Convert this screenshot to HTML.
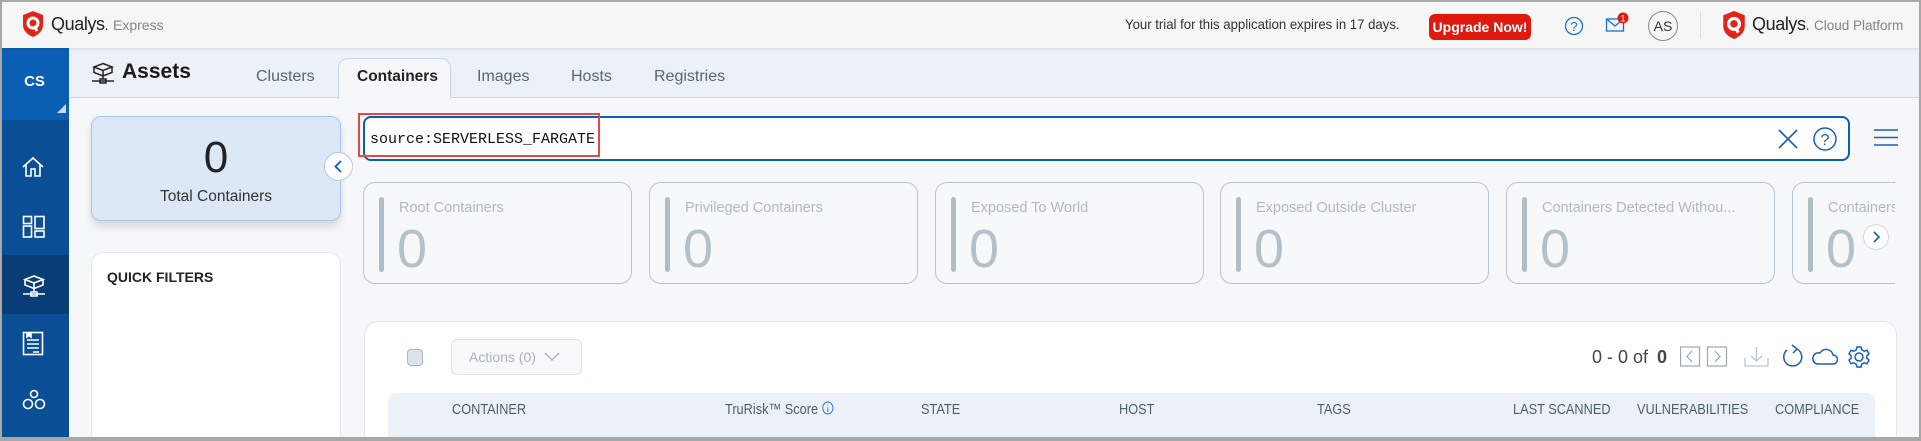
<!DOCTYPE html>
<html style="width:1921px;height:441px;overflow:hidden"><head><meta charset="utf-8"><style>
*{box-sizing:border-box;margin:0;padding:0}
body{width:1921px;height:441px;overflow:hidden;font-family:"Liberation Sans",sans-serif;background:#f5f7f9;position:relative;color:#333}
.a{position:absolute}
.frame{position:absolute;left:0;top:0;width:1921px;height:441px;border:2px solid #a8a8a8;border-bottom-width:4px;pointer-events:none;z-index:50}
.hdr{left:0;top:0;width:1921px;height:48px;background:#f6f6f6;box-shadow:0 1px 3px rgba(0,0,0,.1);z-index:5}
.side{left:0;top:48px;width:69px;height:393px;background:#0a4f96}
.tabbar{left:69px;top:48px;width:1852px;height:50px;background:#ecf1f8;border-bottom:1px solid #c5d7ec}
.tab{top:68px;font-size:16px;color:#5a6570}
.card{width:269px;height:102px;top:182px;border:1px solid #b8c4ce;border-radius:12px;background:#f6f8fa;overflow:hidden}
.card .bar{position:absolute;left:15px;top:14px;width:5px;height:75px;border-radius:3px;background:#b0bec8}
.card .t{position:absolute;left:35px;top:17px;font-size:14.5px;color:#aeb9c3;white-space:nowrap}
.card .n{position:absolute;left:33px;top:35px;font-size:54px;color:#b4c0ca;font-weight:300}
.th{top:401px;font-size:15px;color:#4e5d6c;transform:scaleX(.85);transform-origin:left}
</style></head><body>
<div class="frame"></div>
<div class="a hdr">
 <svg class="a" style="left:23px;top:11px" width="20" height="26" viewBox="0 0 20 26"><path d="M10 0 L20 4 V14 C20 20 15 24 10 26 C5 24 0 20 0 14 V4 Z" fill="#e2231a"/><circle cx="10" cy="12" r="5" fill="none" stroke="#fff" stroke-width="3"/><path d="M11 15 L14 20" stroke="#fff" stroke-width="3"/></svg>
 <div class="a" style="left:51px;top:14px;font-size:18px;color:#222;letter-spacing:-.4px">Qualys<span style="font-size:14px">.</span></div>
 <div class="a" style="left:113px;top:17px;font-size:14px;color:#7d8590">Express</div>
 <div class="a" style="left:1125px;top:16px;font-size:14px;color:#333;transform:scaleX(.94);transform-origin:left">Your trial for this application expires in 17 days.</div>
 <div class="a" style="left:1429px;top:14px;width:102px;height:26px;background:#e0190e;border-radius:6px;color:#fff;font-size:14px;line-height:26px;text-align:center;font-weight:bold">Upgrade Now!</div>
 <svg class="a" style="left:1564px;top:16px" width="20" height="20"><circle cx="10" cy="10" r="8.5" fill="none" stroke="#1a6fcc" stroke-width="1.3"/><text x="10" y="15" font-size="13" text-anchor="middle" fill="#1a6fcc" font-family="Liberation Sans">?</text></svg>
 <svg class="a" style="left:1605px;top:12px" width="26" height="24"><rect x="1.5" y="7" width="17" height="12" fill="none" stroke="#1a6fcc" stroke-width="1.3"/><path d="M1.5 7 L10 14 L18.5 7" fill="none" stroke="#1a6fcc" stroke-width="1.3"/><circle cx="18" cy="6" r="5.5" fill="#e0190e"/><text x="18" y="9.5" font-size="9" text-anchor="middle" fill="#fff" font-family="Liberation Sans">1</text></svg>
 <div class="a" style="left:1648px;top:11px;width:30px;height:30px;border:1px solid #7d8b98;border-radius:50%;font-size:14px;line-height:28px;text-align:center;color:#333">AS</div>
 <div class="a" style="left:1700px;top:12px;width:1px;height:26px;background:#ddd"></div>
 <svg class="a" style="left:1722px;top:11px" width="24" height="28" viewBox="0 0 20 26"><path d="M10 0 L20 4 V14 C20 20 15 24 10 26 C5 24 0 20 0 14 V4 Z" fill="#e2231a"/><circle cx="10" cy="12" r="5" fill="none" stroke="#fff" stroke-width="3"/><path d="M11 15 L14 20" stroke="#fff" stroke-width="3"/></svg>
 <div class="a" style="left:1752px;top:14px;font-size:18px;color:#222;letter-spacing:-.4px">Qualys<span style="font-size:14px">.</span></div>
 <div class="a" style="left:1814px;top:18px;font-size:13.5px;color:#7d8590">Cloud Platform</div>
</div>

<div class="a side">
 <div class="a" style="left:0;top:0;width:69px;height:72px;background:#0a5fb4;color:#fff;font-weight:bold;font-size:15px;text-align:center;line-height:68px">CS</div>
 <div class="a" style="left:57px;top:56px;width:0;height:0;border-left:9px solid transparent;border-bottom:9px solid #c9d9ec"></div>
 <div class="a" style="left:0;top:207px;width:69px;height:59px;background:#083d75"></div>
 <svg class="a" style="left:21px;top:107px" width="24" height="24" fill="none" stroke="#fff" stroke-width="1.6"><path d="M2 12 L12 3 L22 12 M5 10 V21 H10 V14 H14 V21 H19 V10"/></svg>
 <svg class="a" style="left:22px;top:167px" width="24" height="24" fill="none" stroke="#fff" stroke-width="1.6"><rect x="1.5" y="1.5" width="8" height="7"/><rect x="1.5" y="11" width="8" height="11"/><rect x="13" y="1.5" width="9" height="12"/><rect x="13" y="16" width="9" height="6"/></svg>
 <svg class="a" style="left:21px;top:226px" width="26" height="24" fill="none" stroke="#fff" stroke-width="1.6"><path d="M13 2 L22 5.5 L13 9 L4 5.5 Z M4 5.5 V11 L13 14.5 L22 11 V5.5 M13 9 V14.5 M13 14.5 V18 M2 20 H24 M10 18 H16 V22 H10Z"/></svg>
 <svg class="a" style="left:22px;top:283px" width="22" height="26" fill="none" stroke="#fff" stroke-width="1.6"><rect x="1.5" y="1.5" width="19" height="22"/><path d="M5 9 H17 M5 13 H17 M5 17 H17 M11 21 H17"/><path d="M5 2 V6 L7 4.5 L9 6 V2" fill="#fff"/></svg>
 <svg class="a" style="left:21px;top:340px" width="26" height="24" fill="none" stroke="#fff" stroke-width="1.6"><circle cx="13" cy="6" r="3.5"/><circle cx="7" cy="16" r="4.5"/><circle cx="19" cy="16" r="4.5"/></svg>
</div>

<div class="a tabbar">
 <svg class="a" style="left:22px;top:14px" width="24" height="22" fill="none" stroke="#222" stroke-width="1.5"><path d="M12 1.5 L21 5 L12 8.5 L3 5 Z M3 5 V10.5 L12 14 L21 10.5 V5 M12 8.5 V14 M12 14 V17 M1 19 H23 M9 17 H15 V21 H9Z"/></svg>
 <div class="a" style="left:53px;top:12px;font-size:21px;font-weight:bold;color:#1a1a1a">Assets</div>
</div>
<div class="a" style="left:338px;top:58px;width:113px;height:41px;background:#f5f7f9;border:1px solid #c5d7ec;border-bottom:none;border-radius:10px 10px 0 0"></div>
<div class="a tab" style="left:256px">Clusters</div>
<div class="a tab" style="left:357px;font-weight:bold;color:#222;font-size:15.5px">Containers</div>
<div class="a tab" style="left:477px">Images</div>
<div class="a tab" style="left:571px">Hosts</div>
<div class="a tab" style="left:654px">Registries</div>

<div class="a" style="left:91px;top:116px;width:250px;height:105px;background:#dce8f5;border:1px solid #a9c6e8;border-radius:10px;box-shadow:0 6px 8px rgba(0,0,0,.12);text-align:center">
 <div style="font-size:44px;color:#222;margin-top:17px;line-height:48px">0</div>
 <div style="font-size:15.5px;color:#333;margin-top:6px">Total Containers</div>
</div>
<div class="a" style="left:324px;top:152px;width:29px;height:29px;border-radius:50%;background:#fff;border:1px solid #b8c9dc"><svg width="27" height="27"><path d="M16 8 L10.5 13.5 L16 19" fill="none" stroke="#0a5fb4" stroke-width="1.8"/></svg></div>
<div class="a" style="left:91px;top:252px;width:250px;height:186px;background:#fff;border:1px solid #e3e8ee;border-bottom:none;border-radius:12px 12px 0 0">
 <div class="a" style="left:15px;top:16px;font-size:14px;font-weight:bold;color:#222">QUICK FILTERS</div>
</div>

<div class="a" style="left:363px;top:116px;width:1487px;height:45px;background:#fff;border:2px solid #0a5fb4;border-radius:8px"></div>
<div class="a" style="left:358px;top:113px;width:242px;height:44px;border:2px solid #e84545"></div>
<div class="a" style="left:370px;top:131px;font-family:'Liberation Mono',monospace;font-size:15px;color:#111">source:SERVERLESS_FARGATE</div>
<svg class="a" style="left:1777px;top:128px" width="22" height="22"><path d="M2 2 L20 20 M20 2 L2 20" stroke="#1a5fb4" stroke-width="1.6"/></svg>
<svg class="a" style="left:1812px;top:126px" width="26" height="26"><circle cx="13" cy="13" r="11" fill="none" stroke="#1a5fb4" stroke-width="1.5"/><text x="13" y="19" font-size="16" text-anchor="middle" fill="#1a5fb4" font-family="Liberation Sans">?</text></svg>
<svg class="a" style="left:1874px;top:129px" width="24" height="18"><path d="M0 1 H24 M0 8.5 H24 M0 16 H24" stroke="#1a5fb4" stroke-width="1.5"/></svg>

<div class="a card" style="left:363px"><div class="bar"></div><div class="t">Root Containers</div><div class="n">0</div></div>
<div class="a card" style="left:649px"><div class="bar"></div><div class="t">Privileged Containers</div><div class="n">0</div></div>
<div class="a card" style="left:935px"><div class="bar"></div><div class="t">Exposed To World</div><div class="n">0</div></div>
<div class="a card" style="left:1220px"><div class="bar"></div><div class="t">Exposed Outside Cluster</div><div class="n">0</div></div>
<div class="a card" style="left:1506px"><div class="bar"></div><div class="t">Containers Detected Withou...</div><div class="n">0</div></div>
<div class="a" style="left:1792px;top:182px;width:103px;height:102px;overflow:hidden"><div class="a card" style="left:0;top:0"><div class="bar"></div><div class="t">Containers Detected</div><div class="n">0</div></div></div>
<div class="a" style="left:1863px;top:224px;width:26px;height:26px;border-radius:50%;background:#fff;border:1px solid #d0dae4"><svg width="24" height="24"><path d="M10 7 L15 12 L10 17" fill="none" stroke="#0a5fb4" stroke-width="1.6"/></svg></div>

<div class="a" style="left:364px;top:321px;width:1533px;height:117px;background:#fff;border:1px solid #e0e6ec;border-bottom:none;border-radius:14px 14px 0 0"></div>
<div class="a" style="left:407px;top:349px;width:16px;height:17px;background:#dde3e8;border:1px solid #aab5bf;border-radius:4px"></div>
<div class="a" style="left:451px;top:339px;width:131px;height:36px;border:1px solid #dde3e8;border-radius:6px;background:#f7f9fb;font-size:14px;color:#a9b3bd;line-height:34px;padding-left:17px">Actions (0) <svg width="16" height="10" style="margin-left:4px"><path d="M1 1 L8 8 L15 1" fill="none" stroke="#a9b3bd" stroke-width="1.4"/></svg></div>
<div class="a" style="left:1592px;top:347px;font-size:18px;color:#444">0 - 0 of <b style="margin-left:4px">0</b></div>
<svg class="a" style="left:1680px;top:346px" width="50" height="22" fill="none" stroke="#9aa7b4" stroke-width="1.2"><rect x="0.5" y="1" width="19" height="19"/><path d="M12 5 L7 10.5 L12 16"/><rect x="27.5" y="1" width="19" height="19"/><path d="M35 5 L40 10.5 L35 16"/></svg>
<svg class="a" style="left:1744px;top:346px" width="26" height="22" fill="none" stroke="#b8c6d2" stroke-width="1.3"><path d="M1 12 V20 H24 V12 M12.5 1 V15 M7 10 L12.5 15 L18 10"/></svg>
<svg class="a" style="left:1780px;top:344px" width="24" height="26" fill="none" stroke="#1a5fb4" stroke-width="1.5"><path d="M17 5 A9 9 0 1 1 7 6"/><path d="M12 1 L17 5 L13 9"/></svg>
<svg class="a" style="left:1811px;top:346px" width="27" height="20" fill="none" stroke="#1a5fb4" stroke-width="1.5"><path d="M6 18 H22 A4.5 4.5 0 0 0 22 9 A7 7 0 0 0 9 7 A5.5 5.5 0 0 0 6 18 Z"/></svg>
<svg class="a" style="left:1847px;top:345px" width="24" height="24" fill="none" stroke="#1a5fb4" stroke-width="1.5"><circle cx="12" cy="12" r="4"/><path d="M10 2 H14 L14.7 4.8 L17.2 6.2 L20 5.3 L22 8.8 L19.9 10.7 V13.3 L22 15.2 L20 18.7 L17.2 17.8 L14.7 19.2 L14 22 H10 L9.3 19.2 L6.8 17.8 L4 18.7 L2 15.2 L4.1 13.3 V10.7 L2 8.8 L4 5.3 L6.8 6.2 L9.3 4.8 Z"/></svg>

<div class="a" style="left:388px;top:393px;width:1487px;height:45px;background:#ecf1f8;border-radius:8px 8px 0 0;border-bottom:1px solid #c5d7ec"></div>
<div class="a th" style="left:452px">CONTAINER</div>
<div class="a th" style="left:725px">TruRisk™ Score <svg width="14" height="14" style="vertical-align:-1px"><circle cx="7" cy="7" r="6" fill="none" stroke="#1a6fcc"/><path d="M7 6 V11 M7 3.5 V4.5" stroke="#1a6fcc"/></svg></div>
<div class="a th" style="left:921px">STATE</div>
<div class="a th" style="left:1119px">HOST</div>
<div class="a th" style="left:1317px">TAGS</div>
<div class="a th" style="left:1513px">LAST SCANNED</div>
<div class="a th" style="left:1637px">VULNERABILITIES</div>
<div class="a th" style="left:1775px">COMPLIANCE</div>
</body></html>
